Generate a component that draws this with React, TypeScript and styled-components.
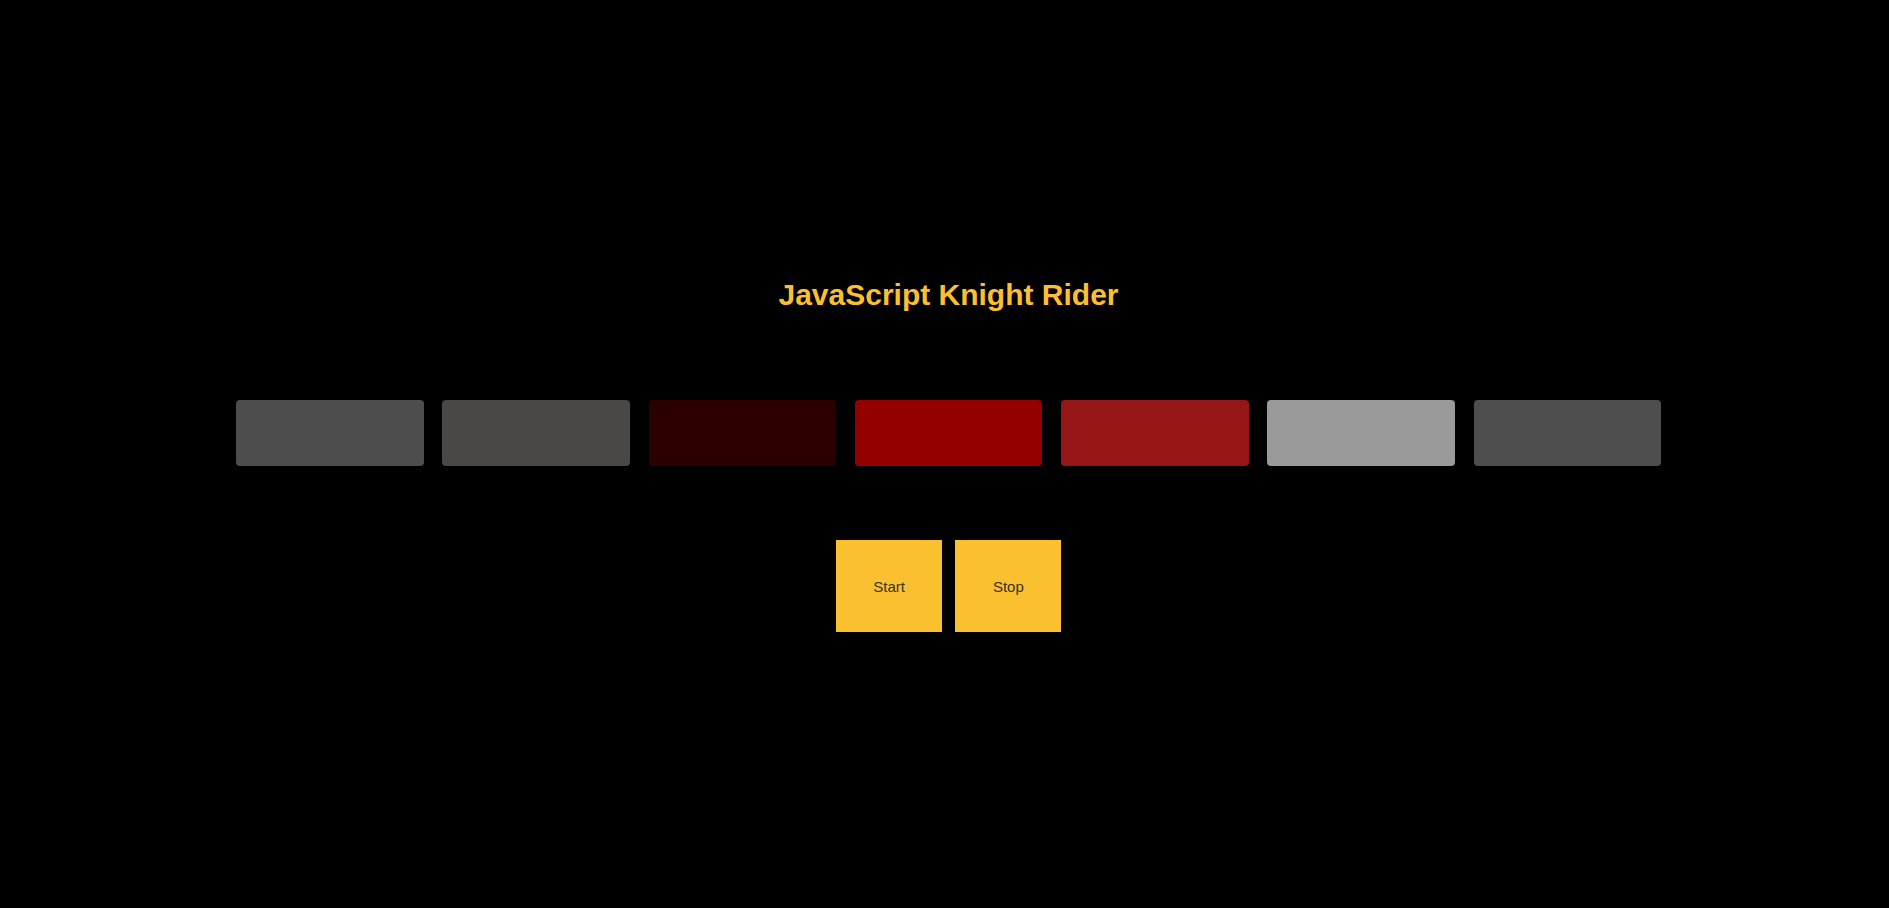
import React from "react";
import styled, { createGlobalStyle } from "styled-components";

const GlobalStyle = createGlobalStyle`
  html, body {
    margin: 0;
    padding: 0;
    background: #000000;
    font-family: "Liberation Sans", Arial, sans-serif;
  }
`;

const Page = styled.main`
  box-sizing: border-box;
  width: 100%;
  min-height: 908px;
  padding: 277px 0 0 8px;
  display: flex;
  flex-direction: column;
  align-items: center;
`;

const Title = styled.h1`
  margin: 0;
  font-size: 30px;
  line-height: 35px;
  font-weight: 700;
  color: #fbbf2f;
  text-align: center;
`;

const LightRow = styled.div`
  display: flex;
  justify-content: center;
  gap: 18.75px;
  margin-top: 88px;
`;

const Light = styled.div<{ $color: string }>`
  width: 187.5px;
  height: 66px;
  border-radius: 4px;
  background: ${(p) => p.$color};
`;

const Controls = styled.div`
  display: flex;
  justify-content: center;
  gap: 13px;
  margin-top: 74px;
`;

const Button = styled.button`
  border: none;
  border-radius: 0;
  background: #fbc02f;
  color: #333333;
  font-family: "Liberation Sans", Arial, sans-serif;
  font-size: 15px;
  line-height: 17px;
  padding: 37.5px;
  cursor: pointer;
`;

const lights = ["#4d4d4d", "#4a4845", "#2d0000", "#940000", "#961515", "#9a9a9a", "#4e4e4e"];

export default function App() {
  return (
    <>
      <GlobalStyle />
      <Page>
        <Title>JavaScript Knight Rider</Title>
        <LightRow>
          {lights.map((c, i) => (
            <Light key={i} $color={c} />
          ))}
        </LightRow>
        <Controls>
          <Button>Start</Button>
          <Button>Stop</Button>
        </Controls>
      </Page>
    </>
  );
}
